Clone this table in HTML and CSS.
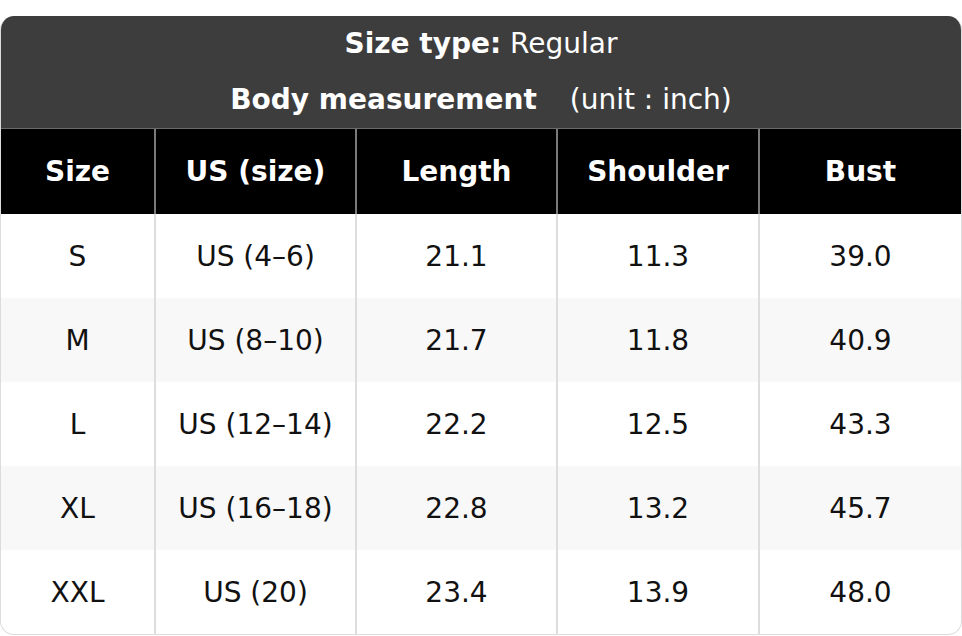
FILE: index.html
```html
<!DOCTYPE html>
<html>
<head>
<meta charset="utf-8">
<link rel="stylesheet" href="styles.css">
</head>
<body>
<div class="chart">
  <div class="title">
    <div class="title-line"><b>Size type:</b> Regular</div>
    <div class="title-line"><b>Body measurement</b><span class="unit">(unit : inch)</span></div>
  </div>
  <table class="sizes">
    <colgroup>
      <col class="c1"><col class="c2"><col class="c3"><col class="c4"><col class="c5">
    </colgroup>
    <thead>
      <tr><th>Size</th><th>US (size)</th><th>Length</th><th>Shoulder</th><th>Bust</th></tr>
    </thead>
    <tbody>
      <tr><td>S</td><td>US (4–6)</td><td>21.1</td><td>11.3</td><td>39.0</td></tr>
      <tr><td>M</td><td>US (8–10)</td><td>21.7</td><td>11.8</td><td>40.9</td></tr>
      <tr><td>L</td><td>US (12–14)</td><td>22.2</td><td>12.5</td><td>43.3</td></tr>
      <tr><td>XL</td><td>US (16–18)</td><td>22.8</td><td>13.2</td><td>45.7</td></tr>
      <tr><td>XXL</td><td>US (20)</td><td>23.4</td><td>13.9</td><td>48.0</td></tr>
    </tbody>
  </table>
</div>
</body>
</html>
```
FILE: styles.css
```css
html, body {
  margin: 0;
  padding: 0;
  background: #ffffff;
}
body {
  padding-top: 16px;
  font-family: "DejaVu Sans", "Liberation Sans", sans-serif;
  font-size: 28px;
}
.chart {
  box-sizing: border-box;
  width: 962px;
  border: 1px solid #dcdcdc;
  border-top: none;
  border-radius: 14px;
  overflow: hidden;
}
.title {
  background: #3d3d3d;
  color: #ffffff;
  text-align: center;
  border-bottom: 1px solid #6a6a6a;
}
.title-line {
  height: 56px;
  line-height: 56px;
}
.title-line b { font-weight: bold; }
.unit { margin-left: 33px; }
.sizes {
  width: 960px;
  table-layout: fixed;
  border-collapse: separate;
  border-spacing: 0;
}
.c1 { width: 153px; }
.c2 { width: 201px; }
.c3 { width: 201px; }
.c4 { width: 202px; }
.c5 { width: 203px; }
.sizes th, .sizes td {
  padding: 0;
  text-align: center;
  vertical-align: middle;
}
.sizes th {
  background: #000000;
  color: #ffffff;
  font-weight: bold;
  height: 85px;
}
.sizes th + th {
  border-left: 2px solid #7a7a7a;
}
.sizes td {
  color: #111111;
  height: 84px;
}
.sizes td + td {
  border-left: 2px solid #dddddd;
}
.sizes tbody tr:nth-child(even) td {
  background: #f8f8f8;
}
```
